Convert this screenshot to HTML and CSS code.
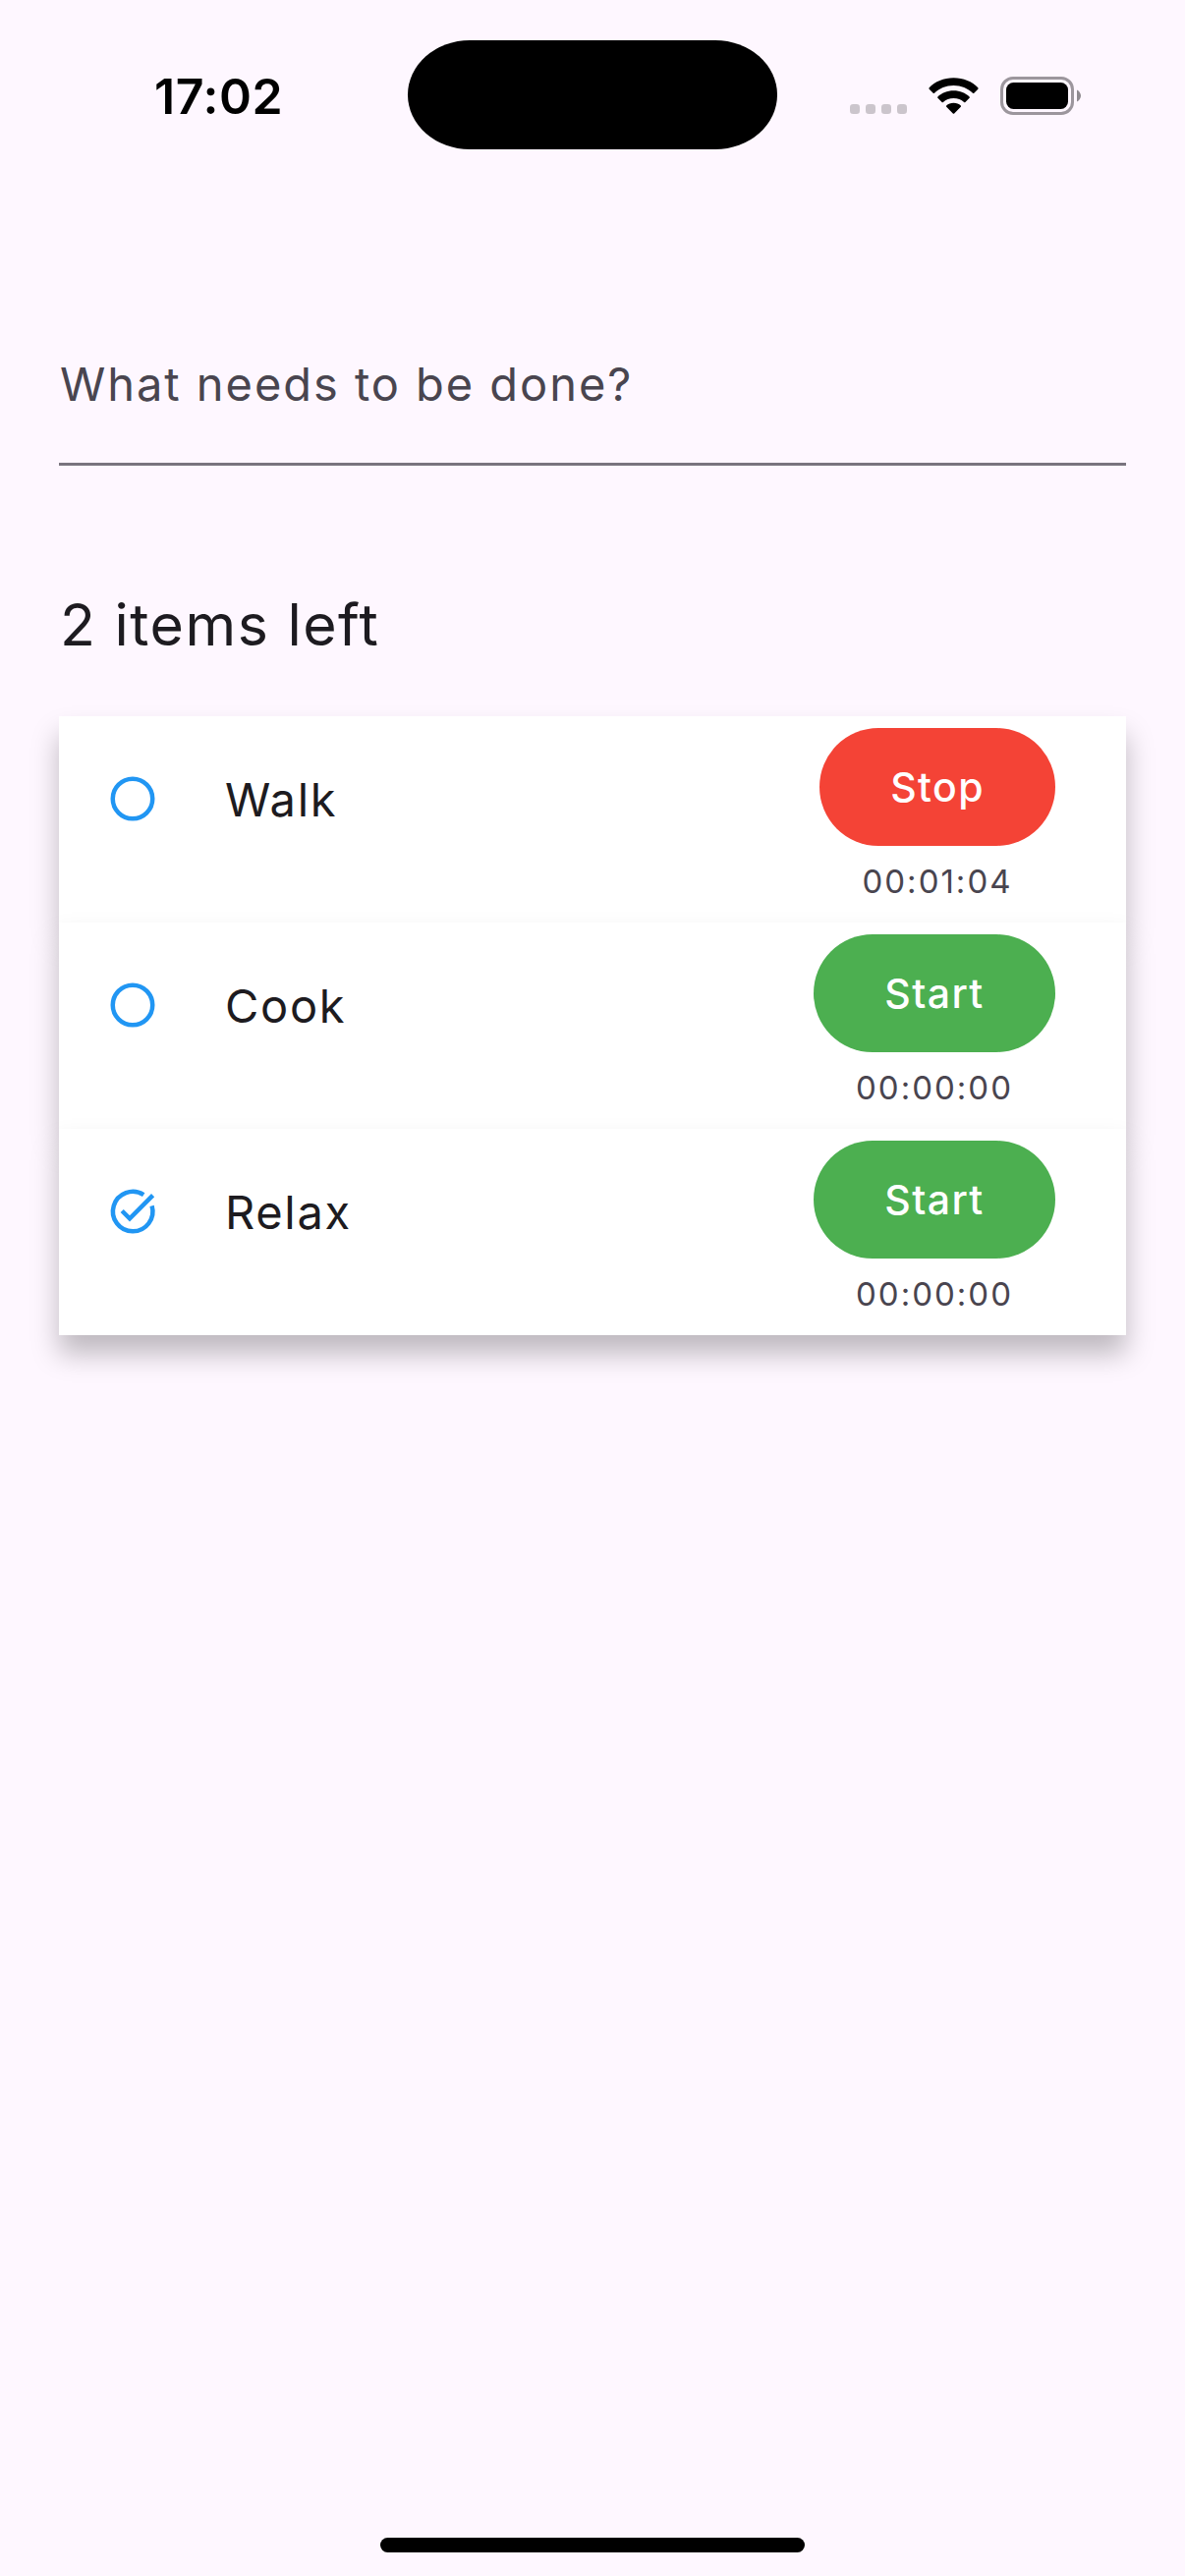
FILE: index.html
```html
<!DOCTYPE html>
<html lang="en">
<head>
<meta charset="utf-8">
<title>Todos</title>
<link rel="stylesheet" href="styles.css">
</head>
<body>
<header class="status">
  <div class="clock"><span>17:02</span></div>
  <div class="island"></div>
  <div class="indicators">
    <svg class="signal" width="60" height="12" viewBox="0 0 60 12"><rect x="0" y="1" width="10" height="10" rx="3.3"/><rect x="16" y="1" width="10" height="10" rx="3.3"/><rect x="32" y="1" width="10" height="10" rx="3.3"/><rect x="48" y="1" width="10" height="10" rx="3.3"/></svg>
    <svg class="wifi" width="51" height="38" viewBox="0 0 51 38"><path d="M25.500 0.300C35.500 0.300 44.500 4.100 50.300 10.200Q51 11 50.300 11.700L46.300 15.700Q45.700 16.300 45 15.700C40 11 33.200 8 25.500 8S11 11 6 15.700Q5.300 16.300 4.700 15.700L.7 11.700Q0 11 .7 10.200C6.500 4.100 15.500.3 25.500.3ZM25.500 13.200C32 13.200 37.600 15.600 41.600 19.400Q42.300 20 41.600 20.700L37.400 24.900Q36.800 25.500 36.100 25C33.400 22.500 29.700 21 25.500 21S17.600 22.500 14.900 25Q14.200 25.500 13.600 24.900L9.400 20.700Q8.700 20 9.400 19.400C13.400 15.600 19 13.200 25.500 13.200ZM25.500 25.800C28.500 25.800 31 26.900 32.800 28.500Q33.500 29.100 32.800 29.800L26.200 36.500Q25.500 37.200 24.800 36.500L18.200 29.800Q17.500 29.100 18.200 28.500C20 26.900 22.500 25.800 25.500 25.800Z"/></svg>
    <svg class="battery" width="82" height="39" viewBox="0 0 82 39"><rect x="1.500" y="1.500" width="72" height="36" rx="11.500" fill="none" stroke="#9c969d" stroke-width="3"/><rect x="6" y="6" width="63" height="27" rx="7.500"/><path d="M78 13.500C80.300 14.500 82 17 82 19.500S80.300 24.500 78 25.500Z" fill="#8f8a90"/></svg>
  </div>
</header>
<main class="content">
  <div class="field"><span class="hint">What needs to be done?</span></div>
  <h1 class="count"><span>2 items left</span></h1>
  <ul class="list">
    <li class="item">
      <svg class="check" viewBox="0 0 54 54"><circle cx="27" cy="27" r="20.250"/></svg>
      <span class="title">Walk</span>
      <div class="timer"><button class="btn stop">Stop</button><span class="time">00:01:04</span></div>
    </li>
    <li class="item">
      <svg class="check" viewBox="0 0 54 54"><circle cx="27" cy="27" r="20.250"/></svg>
      <span class="title">Cook</span>
      <div class="timer"><button class="btn start">Start</button><span class="time">00:00:00</span></div>
    </li>
    <li class="item">
      <svg class="check" viewBox="0 0 54 54"><path d="M38.200 10.100A20.250 20.250 0 1 0 46.600 21.400"/><path d="M16.200 26.500L24 34.300L47.600 10.700"/></svg>
      <span class="title">Relax</span>
      <div class="timer"><button class="btn start">Start</button><span class="time">00:00:00</span></div>
    </li>
  </ul>
</main>
<footer class="home"></footer>
</body>
</html>
```
FILE: styles.css
```css
* { box-sizing: border-box; }
body {
  margin: 0;
  height: 2622px;
  display: flex;
  flex-direction: column;
  background: #fef7ff;
  color: #1d1b20;
  font-family: Inter, "Liberation Sans", sans-serif;
}
.status {
  height: 177px;
  display: grid;
  grid-template-columns: 415px 376px 1fr;
  flex-shrink: 0;
  color: #000;
}
.clock {
  padding: 67px 0 0 157px;
  font-size: 50px;
  line-height: 62px;
  font-weight: 600;
  letter-spacing: 0.6px;
}
.island {
  height: 111px;
  margin-top: 41px;
  border-radius: 63px / 55.5px;
  background: #000;
}
.indicators { display: flex; align-items: flex-start; padding-left: 74px; }
.signal { margin-top: 105px; fill: #cbc5cc; }
.wifi { margin: 79px 0 0 20px; }
.battery { margin: 78px 0 0 22px; }
.content { flex: 1; padding: 0 60px; }
.field {
  height: 297px;
  border-bottom: 3px solid #79747e;
  padding: 186px 0 0 1px;
}
.hint {
  display: block;
  font-size: 47px;
  line-height: 56px;
  font-weight: 380;
  color: #49454f;
  letter-spacing: 1.95px;
}
.count {
  margin: 0;
  height: 255px;
  padding: 127px 0 0 1px;
  font-size: 59px;
  line-height: 70px;
  font-weight: 380;
  letter-spacing: 1.5px;
}
.list { list-style: none; margin: 0; padding: 0; }
.item {
  height: 210px;
  position: relative;
  display: flex;
  background: #fff;
  box-shadow: 0 19px 26px rgba(0, 0, 0, 0.25);
}
.check {
  width: 54px;
  height: 54px;
  margin: 57px 0 0 48px;
  fill: none;
  stroke: #2196f3;
  stroke-width: 4.5;
}
.title {
  margin: 57px 0 0 67px;
  font-size: 47px;
  line-height: 56px;
  font-weight: 380;
  letter-spacing: 1.7px;
}
.timer {
  margin: 12px 72px 0 auto;
  display: flex;
  flex-direction: column;
  align-items: center;
}
.btn {
  width: 246px;
  height: 120px;
  border: 0;
  border-radius: 60px;
  padding: 0;
  color: #fff;
  font: 460 41px/50px Inter, "Liberation Sans", sans-serif;
  letter-spacing: 1.4px;
}
.stop { width: 240px; background: #f44336; }
.start { background: #4caf50; }
.time {
  margin-top: 16px;
  font-size: 33px;
  line-height: 40px;
  font-weight: 440;
  letter-spacing: 2px;
  color: #49454f;
}
.home {
  width: 432px;
  height: 15px;
  margin: 0 auto 24px;
  border-radius: 8px;
  background: #000;
}
```
